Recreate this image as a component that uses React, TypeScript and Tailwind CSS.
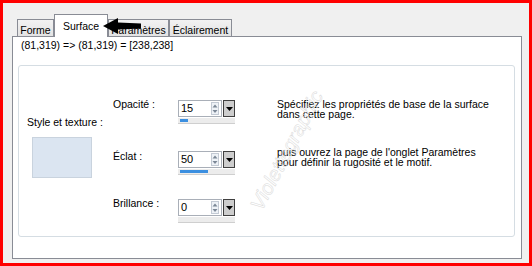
import { ReactNode } from "react";

// ─── SpinBox ──────────────────────────────────────────────────────────────────

function SpinBox({ value }: { value: number }) {
  return (
    <div className="w-[57px]">
      <div className="flex h-[17px]">
        <div className="flex flex-1 items-center justify-between border border-[#a9afb8] bg-white pl-[2px] pr-[2px]">
          <span className="text-[11px] leading-[15px] text-black">{value}</span>
          <div className="flex h-[13px] w-[8px] flex-col border border-[#c3cad4] bg-[#eef2f7]">
            <svg viewBox="0 0 6 5" className="h-[6px] w-[6px]">
              <path d="M3 1 L5.5 4 L0.5 4 Z" fill="#7b8796" />
            </svg>
            <svg viewBox="0 0 6 5" className="h-[5px] w-[6px]">
              <path d="M0.5 1 L5.5 1 L3 4 Z" fill="#7b8796" />
            </svg>
          </div>
        </div>
        <div className="ml-[1px] flex w-[12px] items-center justify-center border border-[#3f3f3f] bg-[#cdcdcd]">
          <svg viewBox="0 0 7 4" className="h-[4px] w-[7px]">
            <path d="M0 0 L7 0 L3.5 4 Z" fill="#000" />
          </svg>
        </div>
      </div>
      <div className="mt-[1px] h-[6px] border-b border-[#cfcfcf] bg-[#ececec] pl-[2px] pt-[1px]">
        <div className="h-[3px] bg-[#3b8fe0]" style={{ width: `${value}%` }} />
      </div>
    </div>
  );
}

// ─── Tab ──────────────────────────────────────────────────────────────────────

function Tab({ children, w, active }: { children: ReactNode; w: string; active?: boolean }) {
  if (active) {
    return (
      <div className={`${w} h-[23px] border border-b-0 border-[#898c95] bg-white pt-[6px] text-center`}>
        {children}
      </div>
    );
  }
  return (
    <div
      className={`${w} mb-[1px] h-[17px] border border-b-0 border-[#898c95] bg-gradient-to-b from-[#f2f2f2] to-[#e3e3e3] pt-[5px] text-center`}
    >
      {children}
    </div>
  );
}

// ─── App ──────────────────────────────────────────────────────────────────────

export default function App() {
  return (
    <div className="relative h-[266px] w-[532px] overflow-hidden border-[3px] border-[#f00] bg-[#f0f0f0] pl-[9px] pt-[11px] font-['Liberation_Sans',Arial,sans-serif] text-[10.5px] leading-[11px] text-black">
      <div className="w-[510px]">
        {/* Tabs */}
        <div className="relative z-10 -mb-px flex h-[23px] items-end pl-[5px]">
          <Tab w="w-[37px]">Forme</Tab>
          <Tab w="w-[54px]" active>
            Surface
          </Tab>
          <Tab w="w-[61px]">Paramètres</Tab>
          <Tab w="w-[63px]">Éclairement</Tab>
        </div>

        {/* Panel */}
        <div className="h-[223px] border border-[#898c95] bg-white pl-[5px] pt-[3px]">
          <div className="pl-[3px]">(81,319) =&gt; (81,319) = [238,238]</div>

          <div className="mt-[14px] flex h-[172px] w-[497px] rounded-[3px] border border-[#d5dde3]">
            {/* Style */}
            <div className="w-[94px] pl-[8px] pt-[51px]">
              <div>Style et texture :</div>
              <div className="ml-[5px] mt-[9px] h-[41px] w-[60px] border border-[#c9d3de] bg-[#dbe5f1]" />
            </div>

            {/* Sliders */}
            <div className="w-[122px] pt-[34px]">
              <div className="flex items-start">
                <span className="mt-[-1px] w-[65px]">Opacité :</span>
                <SpinBox value={15} />
              </div>
              <div className="mt-[27px] flex items-start">
                <span className="w-[65px]">Éclat :</span>
                <SpinBox value={50} />
              </div>
              <div className="mt-[24px] flex items-start">
                <span className="mt-[-1px] w-[65px]">Brillance :</span>
                <SpinBox value={0} />
              </div>
            </div>

            {/* Description */}
            <div className="ml-[42px] w-[230px] pt-[33px] leading-[10px]">
              <p>
                Spécifiez les propriétés de base de la surface
                <br />
                dans cette page.
              </p>
              <p className="mt-[28px]">
                puis ouvrez la page de l'onglet Paramètres
                <br />
                pour définir la rugosité et le motif.
              </p>
            </div>
          </div>
        </div>
      </div>

      {/* Arrow */}
      <svg viewBox="0 0 38 16" className="absolute left-[100px] top-[15px] z-20 h-[16px] w-[38px]">
        <path d="M0 8 L15 0 L15 4.5 L38 5.5 L38 10.5 L15 11.5 L15 16 Z" fill="#000" />
      </svg>

      {/* Watermark */}
      <span className="pointer-events-none absolute left-[218px] top-[142px] z-20 -rotate-[62deg] whitespace-nowrap text-[20px] italic text-transparent [-webkit-text-stroke:0.5px_#dadada]">
        Violettegraphic
      </span>
    </div>
  );
}
